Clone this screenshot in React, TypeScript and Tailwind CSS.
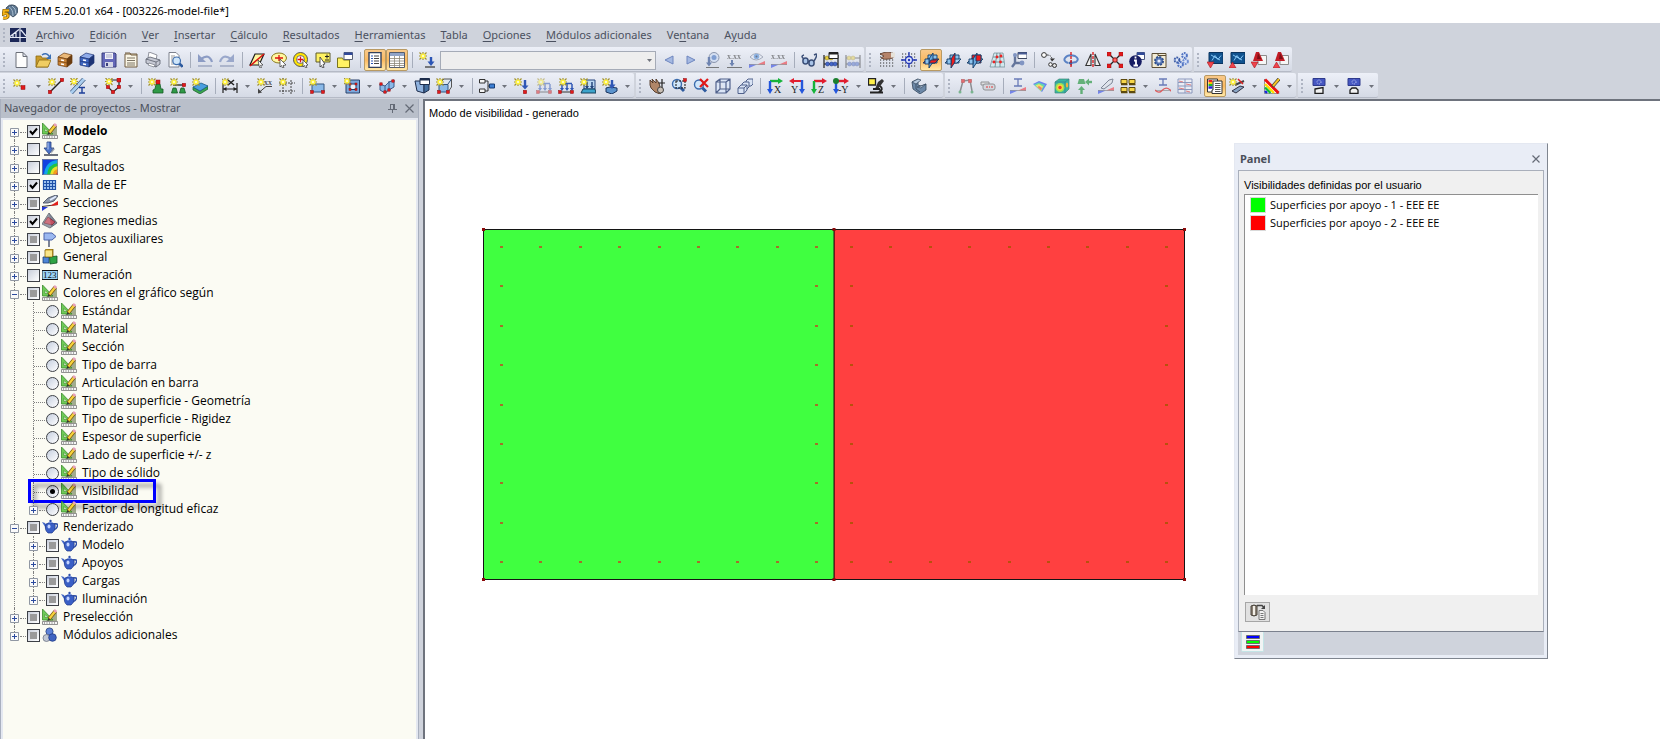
import React, { useState } from "react";
import { clsx } from "clsx";

/* ---------- small drawing helpers ---------- */

const Star = ({ x = 4, y = 4 }: { x?: number; y?: number }) => (
  <g transform={`translate(${x} ${y})`}>
    <path d="M-3.5-3.5 3.5 3.5M3.5-3.5-3.5 3.5M0-4V4M-4 0H4" stroke="#a3922e" strokeWidth="1.2" />
    <circle r="2.6" fill="#fff23a" />
    <circle r="1.1" fill="#fffde0" />
  </g>
);

const Node = ({ x, y, r = 2 }: { x: number; y: number; r?: number }) => (
  <rect x={x - r} y={y - r} width={r * 2} height={r * 2} fill="#e3191b" stroke="#8d1113" strokeWidth=".5" />
);

const Glass = ({ x = 9, y = 9 }: { x?: number; y?: number }) => (
  <g>
    <path d={`M${x + 3} ${y + 3}l4 4`} stroke="#2d5a9e" strokeWidth="3" />
    <circle cx={x} cy={y} r="4.5" fill="#cfe6fa" stroke="#3b6cae" strokeWidth="1.4" />
  </g>
);

const Cabinet = ({ a, b, c }: { a: string; b: string; c: string }) => (
  <g stroke={c} strokeWidth=".7">
    <path d="M1 5l6-4 8 2-5 4z" fill={a} />
    <path d="M10 7l5-4v8l-5 4z" fill={c} />
    <path d="M1 5l9 2v8l-9-2z" fill={b} />
    <path d="M1 9l9 2" />
    <path d="M4 8l3 .6M4 12l3 .6" stroke="#fff" strokeWidth="1.5" />
  </g>
);

const Planes = ({ hot }: { hot: "flat" | "side" | "front" }) => (
  <g stroke="#123a66" strokeWidth=".9">
    <path d="M5 3h9v8H5z" fill={hot === "front" ? "#f01c1c" : "#8cc4ef"} />
    <path d="M0 11l4-4h12l-4 4z" fill={hot === "flat" ? "#f01c1c" : "#a9d3f5"} />
    <path d="M6 7l4-6v9l-4 6z" fill={hot === "side" ? "#f01c1c" : "#6aa9df"} />
    <path d="M2 7h4v5H2z" fill="#8cc4ef" />
    {hot === "flat" && <path d="M6 11l2-3h7l-3 3z" fill="#f01c1c" />}
    {hot === "front" && <path d="M9 3h5v6H9z" fill="#f01c1c" />}
  </g>
);

const Grid = ({ c = "#333" }: { c?: string }) => (
  <path d="M1 2h15M1 5h15M1 8h15M1 11h15M1 14h15" stroke={c} strokeWidth="1.2" strokeDasharray="1.200 1.800" />
);

const Axes = ({ h, v, t, flip }: { h: string; v: string; t: string; flip?: boolean }) => (
  <g>
    {flip ? (
      <>
        <path d="M14 3H4M13 3v9" stroke={h} strokeWidth="2" />
        <path d="M5 0v6L0 3z" fill={h} />
        <path d="M13 2v10" stroke={v} strokeWidth="2.400" />
        <path d="M10 11h6l-3 5z" fill={v} />
      </>
    ) : (
      <>
        <path d="M3 3h9" stroke={h} strokeWidth="2.400" />
        <path d="M11 0v6l5-3z" fill={h} />
        <path d="M3 3v9" stroke={v} strokeWidth="2.400" />
        <path d="M0 11h6l-3 5z" fill={v} />
      </>
    )}
    <text x={flip ? 2 : t.length > 1 ? 5 : 7} y="15" fontSize="10" fontFamily="Liberation Serif, serif" fill="#222">
      {t}
    </text>
  </g>
);

const ResultBar = () => (
  <>
    <path d="M0 12v4l8-3.500z" fill="#5367e8" />
    <path d="M16 9v4l-8-.5z" fill="#ee5a62" />
    <path d="M0 12.500h16" stroke="#777" strokeWidth=".7" />
  </>
);

const Eye = () => (
  <>
    <path d="M1 5q6-7 13 0-7 6-13 0z" fill="#e8ecf5" stroke="#8d95a8" />
    <circle cx="7.500" cy="4.500" r="2.800" fill="#6f9fdc" />
    <circle cx="7.500" cy="4.500" r="1" fill="#40506e" />
  </>
);

const Abacus = ({ dim }: { dim?: boolean }) => (
  <g opacity={dim ? 0.45 : 1}>
    <path d="M1 3v13M15 3v13M1 6h14M1 12h14" stroke="#222" strokeWidth="1.200" />
    <g fill="#e6cd3c" stroke="#8b7714" strokeWidth=".5">
      <circle cx="4" cy="6" r="2" />
      <circle cx="8" cy="6" r="2" />
    </g>
    <g fill="#4567c9" stroke="#1f357d" strokeWidth=".5">
      <circle cx="4.500" cy="12" r="2" />
      <circle cx="8.500" cy="12" r="2" />
      <circle cx="12" cy="12" r="2" />
    </g>
  </g>
);

const Screen = ({ up }: { up?: boolean }) => (
  <>
    <path d="M2 .5h14v11H2z" fill="#10528f" stroke="#0a3460" />
    <path d="M5 8.500l3-5 3 4 3-4M4 3l9 5" stroke="#8fd0ff" strokeWidth=".9" fill="none" />
    {up ? <path d="M0 16l3.500-6 3.500 6z" fill="#f0434c" stroke="#a51a20" strokeWidth=".6" /> : <path d="M0 10h7l-3.500 6z" fill="#f0434c" stroke="#a51a20" strokeWidth=".6" />}
  </>
);

const PdfMark = ({ up }: { up?: boolean }) => (
  <>
    <path d="M7 3.500h8.500v9H7z" fill="#f6f6f6" stroke="#8c8c8c" />
    <path d="M5 0h3l4 9H2z" fill="#c21c26" />
    <path d="M7 1l3 6H6z" fill="#7e0f16" />
    {up ? <path d="M0 16l3.500-6 3.500 6z" fill="#f0434c" stroke="#a51a20" strokeWidth=".6" /> : <path d="M0 10h7l-3.500 6z" fill="#f0434c" stroke="#a51a20" strokeWidth=".6" />}
  </>
);

const Projector = ({ tilt }: { tilt?: boolean }) => (
  <>
    <path d="M2 .5h12v7H2z" fill="#4657c2" stroke="#2e3a8c" />
    <circle cx="8" cy="4" r="2" stroke="#c5ccf5" strokeDasharray="1 1" />
    <path d={tilt ? "M4 11l8-1.500V15.500H4z" : "M4 15.500V12l2-2h4l2 2v3.500z"} fill="#f2f2f2" stroke="#1d1d1d" strokeWidth="1.300" />
  </>
);

const SmallGear = ({ x, y, c }: { x: number; y: number; c: string }) => (
  <circle cx={x} cy={y} r="2.400" fill="#dbe5fa" stroke={c} strokeWidth="2" strokeDasharray="1.600 .8" />
);

const Gate = ({ dim }: { dim?: boolean }) => (
  <g opacity={dim ? 0.5 : 1}>
    <path d="M4 11V6M9 11V6M14 11V6M4 5.500h10" stroke="#2f57b5" strokeWidth="1.500" />
    <path d="M2 10h4l-2 3zM7 10h4l-2 3zM12 10h4l-2 3z" fill="#2f57b5" />
    <path d="M1 14h14" stroke="#333" />
    <Node x={2} y={14} r={1.5} />
    <Node x={14} y={14} r={1.5} />
    <Star x={5} y={4} />
  </g>
);

const icons: Record<string, React.ReactNode> = {
  newFile: <path d="M3 .5h7l4 4V15.500H3zM10 .5v4h4" fill="#fdfdfd" stroke="#6b6f78" />,
  open: (
    <>
      <path d="M1 4h5l1 2h6v9H1z" fill="#c99b2c" stroke="#8d6b12" strokeWidth=".8" />
      <path d="M4 8h12l-3 7H1z" fill="#f0cd62" stroke="#8d6b12" strokeWidth=".8" />
      <path d="M7 3q4-3 7 1" stroke="#3a6fb5" strokeWidth="1.500" />
      <path d="M16 2v5h-5z" fill="#3a6fb5" />
    </>
  ),
  cabinet: <Cabinet a="#eab878" b="#c98337" c="#6b3c10" />,
  cabinetBlue: <Cabinet a="#8fabea" b="#3f66c0" c="#1c3375" />,
  save: (
    <>
      <path d="M1 1h13l1 1v13H1z" fill="#6468b8" stroke="#3b3f7e" />
      <path d="M4 1h8v6H4z" fill="#f2f2f8" />
      <path d="M5 3h6M5 5h6" stroke="#a6a9c9" />
      <path d="M4 10h8v5H4z" fill="#d4d6e6" />
      <path d="M5 11h2v3H5z" fill="#3b3f7e" />
    </>
  ),
  report: (
    <>
      <path d="M2 2h12v13H2z" fill="#faf6e6" stroke="#6e5a3e" />
      <path d="M2 1h5l1 2h6" stroke="#6e5a3e" fill="#d9c59d" />
      <path d="M4 6h8M4 8.500h8M4 11h8M4 13h8" stroke="#7c7465" />
    </>
  ),
  print: (
    <>
      <path d="M4 0l8 3-1 5-8-2z" fill="#fff" stroke="#777a86" strokeWidth=".8" />
      <path d="M1 7l4-2 10 3v4l-4 3L1 11z" fill="#c6c9d4" stroke="#5b5f6c" strokeWidth=".8" />
      <path d="M1 7l10 3v5M11 10l4-2" stroke="#5b5f6c" strokeWidth=".8" />
      <path d="M4 11l6 2-1 2-6-2z" fill="#fff" stroke="#5b5f6c" strokeWidth=".6" />
    </>
  ),
  preview: (
    <>
      <path d="M2 .5h7l3 3V15H2z" fill="#fff" stroke="#7c818d" />
      <path d="M4 4h4M4 6h4M4 8h2M4 10h2M4 12h3" stroke="#999" />
      <g transform="translate(2 2) scale(.85)">
        <Glass x={9} y={8} />
      </g>
    </>
  ),
  undo: (
    <>
      <path d="M4 7q8-6 11 3" stroke="#8c9cc4" strokeWidth="2.200" />
      <path d="M1 2v8h8z" fill="#8c9cc4" />
      <path d="M1 14h14" stroke="#a7b0c8" strokeWidth="1.800" />
    </>
  ),
  redo: (
    <>
      <path d="M1 10q3-9 11-3" stroke="#9aa8cb" strokeWidth="2.200" />
      <path d="M15 2v8H7z" fill="#9aa8cb" />
      <path d="M1 14h14" stroke="#a7b0c8" strokeWidth="1.800" />
    </>
  ),
  selectRhomb: (
    <>
      <path d="M6 2h9l-5 11H1z" fill="#fff7a0" stroke="#1a1a1a" strokeWidth="1.200" />
      <path d="M1 14L15 2" stroke="#d11" strokeWidth="1.500" />
      <path d="M9 8l5 5-2.500.3 1 2.200-1.500.5-1-2.500z" fill="#fff" stroke="#333" strokeWidth=".7" />
    </>
  ),
  selectEllipse: (
    <>
      <ellipse cx="8" cy="6" rx="7.500" ry="5" fill="#fff7a0" stroke="#8a7a20" />
      <path d="M4 6h8M8 3v6" stroke="#d11" strokeWidth="1.300" />
      <path d="M9 7l6 6-3 .5 1 2-1.500.5-1-2.500L9 15z" fill="#fff" stroke="#333" strokeWidth=".7" />
    </>
  ),
  selectRing: (
    <>
      <circle cx="7.500" cy="7.500" r="7" fill="#ffe500" stroke="#555" />
      <circle cx="7.500" cy="7.500" r="4" fill="#fff" stroke="#555" strokeWidth=".8" />
      <path d="M4.500 7.500h6M7.500 4.500v6" stroke="#d11" strokeWidth="1.300" />
      <path d="M10 8l5 5-2 .5 1 2-1.500.5-1-2.500L10 15z" fill="#fff" stroke="#333" strokeWidth=".7" />
    </>
  ),
  selectPlus: (
    <>
      <path d="M1 1h14v9H1z" fill="#fff263" stroke="#5c5a2a" />
      <path d="M10 4.500h4M12 2.500v4M10 8h4" stroke="#222" />
      <path d="M5 5l5 7-2 .5 1 3-1.500.5-1-2.500L5 15z" fill="#fff" stroke="#333" strokeWidth=".8" />
    </>
  ),
  folderWindow: (
    <>
      <path d="M.5 6h5l1 2h6v7.500H.5z" fill="#fff263" stroke="#7a741b" />
      <path d="M7 .5h8.500v7H7z" fill="#fff" stroke="#5b6275" />
      <path d="M7 .5h8.500V3H7z" fill="#314a9a" />
    </>
  ),
  navList: (
    <>
      <path d="M2 .5h12v15H2z" fill="#fff" stroke="#33415c" strokeWidth="1.400" />
      <path d="M4 4h2M4 6.500h2M4 9h2M4 11.500h2" stroke="#2b55b5" />
      <path d="M7 4h5M7 6.500h5M7 9h5M7 11.500h5" stroke="#444" />
    </>
  ),
  tableList: (
    <>
      <path d="M.5.5h15v15H.5z" fill="#fff" stroke="#555d6d" />
      <path d="M1 1h14v3H1z" fill="#90a4c8" />
      <path d="M1 6.500h14M1 9h14M1 11.500h14M1 13.500h14M5.500 4v11M10.500 4v11" stroke="#8b8777" strokeWidth=".8" />
    </>
  ),
  loadCase: (
    <>
      <Star x={4} y={4} />
      <path d="M12 5v6" stroke="#2b55b5" strokeWidth="2.400" />
      <path d="M8.500 9.500h7L12 14z" fill="#2b55b5" />
      <path d="M6 15h10" stroke="#555" strokeWidth="1.500" />
    </>
  ),
  prev: <path d="M12 4v8L4 8z" fill="#a5b9e2" stroke="#6e86bf" />,
  next: <path d="M4 4v8l8-4z" fill="#a5b9e2" stroke="#6e86bf" />,
  showLoads: (
    <g opacity=".75">
      <circle cx="9" cy="5.500" r="5" fill="#cfdcf2" stroke="#6d7a96" />
      <circle cx="9" cy="5.500" r="2.500" fill="#5f86c8" />
      <path d="M4 5v7" stroke="#49659e" strokeWidth="2.400" />
      <path d="M1 10.500h6L4 14.500z" fill="#49659e" />
      <path d="M1 15.500h13" stroke="#555" />
    </g>
  ),
  loadValues: (
    <g opacity=".75">
      <text x="0" y="7" fontSize="8" fontFamily="Liberation Serif, serif" fill="#333">x.xx</text>
      <path d="M5 8v4" stroke="#49659e" strokeWidth="2" />
      <path d="M2.500 11h5L5 14.500z" fill="#49659e" />
      <path d="M0 15.500h15" stroke="#555" />
    </g>
  ),
  showResults: (
    <g opacity=".75">
      <Eye />
      <ResultBar />
    </g>
  ),
  resultValues: (
    <g opacity=".75">
      <text x="0" y="7" fontSize="8" fontFamily="Liberation Serif, serif" fill="#333">x.xx</text>
      <ResultBar />
    </g>
  ),
  glasses: (
    <g fill="#a9c4e8" stroke="#3b4f78" strokeWidth="1.500">
      <path d="M3 7q-4-3 0-4M13 9q4-6 2-7l-2 1" fill="none" />
      <ellipse cx="4.500" cy="9" rx="2.600" ry="3" />
      <ellipse cx="10.500" cy="11" rx="2.600" ry="3" />
      <path d="M7 9l1.500 1" />
    </g>
  ),
  abacusWindow: (
    <>
      <Abacus />
      <path d="M6 .5h9v6H6z" fill="#fff" stroke="#222" />
      <path d="M6 .5h9v2H6z" fill="#222" />
    </>
  ),
  abacus: <Abacus dim />,
  handGrid: (
    <>
      <Grid />
      <path d="M1 2q4-2 8-2l5 1v5l-4 1q-5 1-8-1l3-2z" fill="#b5836a" stroke="#57392a" strokeWidth=".8" />
      <path d="M12 .5h4v5h-4z" fill="#e6e2da" />
    </>
  ),
  snapGrid: (
    <>
      <Grid />
      <path d="M8 0v16M0 8h16" stroke="#2338b8" strokeWidth="1.300" />
      <circle cx="8" cy="8" r="3.500" fill="#dfe7fb" stroke="#2338b8" strokeWidth="1.300" />
      <circle cx="8" cy="8" r="1.200" fill="#2338b8" />
    </>
  ),
  planeXY: <Planes hot="flat" />,
  planeYZ: <Planes hot="side" />,
  planeXZ: <Planes hot="front" />,
  redGrid: (
    <>
      <path d="M5 1h9l2 14H1z" fill="#d3e8ee" stroke="#6a8790" strokeWidth=".7" />
      <path d="M8 1l-2 14M11 1l0 14M4 5h10M3 10h12" stroke="#5f7b84" strokeWidth=".8" />
      <g fill="#e22">
        <circle cx="8" cy="5" r="1.400" />
        <circle cx="5" cy="10" r="1.400" />
        <circle cx="11.500" cy="10" r="1.400" />
        <circle cx="12" cy="4" r="1.400" />
      </g>
    </>
  ),
  axisWindow: (
    <>
      <path d="M4 3v8h7M4 11l-3 4" stroke="#64759b" strokeWidth="2.400" />
      <path d="M7 .5h9v6H7z" fill="#fff" stroke="#3c4660" />
      <path d="M7 .5h9v2H7z" fill="#4a5e96" />
      <circle cx="4" cy="3" r="2" fill="#8195c2" />
      <circle cx="11" cy="11" r="2.400" fill="#8195c2" />
    </>
  ),
  moveCopy: (
    <>
      <circle cx="3" cy="3" r="2.400" fill="#fff" stroke="#333" />
      <path d="M6 3q5 0 5 5" stroke="#333" strokeDasharray="1.500 1" />
      <path d="M9 6.500h5l-3 3z" fill="#333" />
      <circle cx="9.500" cy="12.500" r="1.800" fill="#fff" stroke="#333" />
      <circle cx="13.500" cy="13.500" r="2" fill="#ddd" stroke="#333" />
    </>
  ),
  rotate: (
    <>
      <path d="M5 11Q0 9 2 6q3-4 10-2 5 3 1 6l-5 1" stroke="#5a82c4" strokeWidth="2" />
      <path d="M9 8v6l-4-3z" fill="#3c64a8" />
      <path d="M8 0v16" stroke="#d11" strokeWidth="1.300" strokeDasharray="3 1" />
    </>
  ),
  mirror: (
    <>
      <path d="M8 0v16" stroke="#d11" strokeWidth="1.300" strokeDasharray="3 1" />
      <path d="M6 2v11.500H.8zM10 2v11.500h5.200z" fill="#eee" stroke="#333" strokeWidth="1.100" />
    </>
  ),
  connect: (
    <>
      <path d="M2 2l12 12M14 2L2 14" stroke="#222" strokeWidth="1.300" />
      <Node x={2} y={2} />
      <Node x={14} y={2} />
      <Node x={2} y={14} />
      <Node x={14} y={14} />
      <circle cx="8" cy="8" r="2.200" fill="#f66" stroke="#911" />
    </>
  ),
  info: (
    <>
      <path d="M8 .5h7.500v7H8z" fill="#fff" stroke="#4b567e" />
      <path d="M8 .5h7.500V3H8z" fill="#314a9a" />
      <circle cx="6.500" cy="9.500" r="6.300" fill="#171d63" />
      <path d="M6.500 4.500v2M5 8.500h2v5M4.500 13.500h4.500" stroke="#fff" strokeWidth="1.800" />
    </>
  ),
  gearPage: (
    <>
      <path d="M1 1.500h14v14H1z" fill="#f3ecd6" stroke="#5a4c34" />
      <path d="M1 1.500h6v2h8" stroke="#5a4c34" />
      <circle cx="8" cy="9" r="4" fill="#5d7cb8" stroke="#30508f" strokeWidth="2" strokeDasharray="2 1.100" />
      <circle cx="8" cy="9" r="1.600" fill="#e8eefa" />
    </>
  ),
  gears: (
    <>
      <SmallGear x={4} y={8} c="#3a5ba6" />
      <SmallGear x={11.500} y={3.500} c="#5274c2" />
      <SmallGear x={7.500} y={12.500} c="#5274c2" />
      <SmallGear x={12.500} y={9.500} c="#7290d3" />
    </>
  ),
  screenIn: <Screen />,
  screenOut: <Screen up />,
  pdfIn: <PdfMark />,
  pdfOut: <PdfMark up />,

  node: (
    <>
      <Star x={4} y={5} />
      <Node x={10} y={9.500} />
    </>
  ),
  line: (
    <>
      <path d="M2 14L14 2" stroke="#222" strokeWidth="1.400" />
      <Node x={2} y={14} r={1.7} />
      <Node x={14} y={2} r={1.7} />
      <Star x={4} y={4} />
    </>
  ),
  member: (
    <>
      <path d="M1 15L14 1" stroke="#a9cdf0" strokeWidth="3" />
      <path d="M0 13.500L12.500 0M2.500 16L15.500 2" stroke="#32557f" strokeWidth=".9" />
      <path d="M9 9.500h6M9 15h6M12 9.500V15" stroke="#1e3f99" strokeWidth="1.400" />
      <Star x={4} y={3.500} />
    </>
  ),
  polyline: (
    <>
      <path d="M4 2h10v7l-6 5-5-5" stroke="#222" strokeWidth="1.200" />
      <Node x={14} y={2} />
      <Node x={14} y={9} r={1.7} />
      <Node x={8} y={14} r={1.7} />
      <Node x={3} y={9} r={1.7} />
      <Star x={4} y={3.500} />
    </>
  ),
  nodalSupport: (
    <>
      <path d="M8 6h4l1 5h2v4H5v-3l2-1z" fill="#2f9a47" stroke="#145a24" strokeWidth=".8" />
      <Node x={10} y={4} />
      <Star x={4} y={4} />
    </>
  ),
  lineSupport: (
    <>
      <path d="M3 7h12" stroke="#222" strokeWidth="1.300" />
      <path d="M3 10h3l1.500 5h-6zM11 10h3l1.500 5h-6z" fill="#2f9a47" stroke="#145a24" strokeWidth=".8" />
      <Node x={14} y={7} r={1.7} />
      <Star x={4} y={4} />
    </>
  ),
  surfaceSupport: (
    <>
      <path d="M1 9v3l7 4 8-5V8l-8 5z" fill="#3aa650" stroke="#155a26" strokeWidth=".7" />
      <path d="M1 9l8-4 7 3-8 5z" fill="#4a9fe0" stroke="#1c5d86" strokeWidth=".8" />
      <Star x={4} y={4} />
    </>
  ),
  dimension: (
    <>
      <path d="M1 5v10M15 5v10M1 11h14" stroke="#222" strokeWidth="1.200" />
      <path d="M1 11l3.500-2v4zM15 11l-3.500-2v4z" fill="#222" />
      <path d="M6 2l6 5M12 2L6 7" stroke="#222" strokeWidth="1.500" />
      <Star x={3} y={4} />
    </>
  ),
  comment: (
    <>
      <text x="7" y="7" fontSize="8" fontFamily="Liberation Serif, serif" fill="#222">xx</text>
      <path d="M15 8.500H9l-7 6" stroke="#444" />
      <path d="M1 15.500v-5l4 4z" fill="#444" />
      <Star x={4} y={4} />
    </>
  ),
  gridLines: (
    <>
      <path d="M4 0v16M12 2v14M0 5h16M0 13h16" stroke="#444" strokeDasharray="2 1" />
      <Star x={4} y={4} />
    </>
  ),
  surface: (
    <>
      <path d="M3 6h12v8H3z" fill="#8ab9e8" stroke="#33547f" />
      <Node x={3} y={14} r={1.5} />
      <Node x={14} y={14} r={1.5} />
      <Star x={4} y={4} />
    </>
  ),
  opening: (
    <>
      <path d="M2 2h13.500v13H2z" fill="#7ca8dc" stroke="#2a426b" />
      <path d="M6 6h6v5.500H6z" fill="#eef4fc" stroke="#223f6b" />
      <Node x={6} y={6} r={1} />
      <Node x={12} y={11.500} r={1} />
      <Node x={12} y={6} r={1} />
      <Node x={6} y={11.500} r={1} />
      <Star x={3} y={3} />
    </>
  ),
  foldSurface: (
    <>
      <path d="M1 6l5 2 4-4 5-2v7l-5 3-4 3-5-3z" fill="#8ab9e8" stroke="#3d5c8c" />
      <path d="M6 8v7M10 3v9" stroke="#3d5c8c" />
      <Node x={2} y={6} r={1.2} />
      <Node x={10} y={12} r={1.2} />
      <Node x={6} y={14} r={1.2} />
      <Node x={14} y={3} r={1.2} />
    </>
  ),
  solidWindow: (
    <>
      <path d="M1 3h9v12l-7-2z" fill="#8fb2de" stroke="#1d2d4c" />
      <path d="M10 5l5-1v8l-5 3z" fill="#456f9f" stroke="#1d2d4c" />
      <path d="M6 .5h9.500v6H6z" fill="#fff" stroke="#1d2d4c" />
      <path d="M6 .5h9.500v2H6z" fill="#1d2d4c" />
    </>
  ),
  solid: (
    <>
      <path d="M3 6l5-5h7.500v8L12 14z" fill="#dde6f2" stroke="#555" />
      <path d="M3 6.500h9V14H3zM12 6l3.500-5" fill="#8ab9e8" stroke="#33547f" />
      <Node x={3} y={14} r={1.5} />
      <Node x={12} y={14} r={1.5} />
      <Star x={4} y={4} />
    </>
  ),
  tree: (
    <>
      <path d="M5 3h4v10H5M9 8h3" stroke="#333" />
      <path d="M.5 1.500H6v3.500H.5zM.5 11H6v3.500H.5z" fill="#f4f4f4" stroke="#333" />
      <path d="M10.500 6h5v4h-5z" fill="#3c7fd4" stroke="#173d74" />
    </>
  ),
  nodalLoad: (
    <>
      <path d="M11 2v7" stroke="#2f57b5" strokeWidth="2.400" />
      <path d="M7.500 7.500h7L11 11.500z" fill="#2f57b5" />
      <Node x={11} y={14} r={1.7} />
      <Star x={4} y={4} />
    </>
  ),
  memberLoadDim: <Gate dim />,
  memberLoad: <Gate />,
  surfaceLoad: (
    <>
      <path d="M4 2h11v9H4z" fill="#bcd8f3" stroke="#26457c" />
      <path d="M3 11h12l1 4H1z" fill="#3ca4cc" stroke="#16415a" />
      <path d="M7 4v6M12 4v6" stroke="#26457c" strokeWidth="1.500" />
      <path d="M5 8h4l-2 3zM10 8h4l-2 3z" fill="#26457c" />
      <Star x={4} y={4} />
    </>
  ),
  solidLoad: (
    <>
      <path d="M4 10l4-1 7 1v3l-5 3-6-2z" fill="#5b93cc" stroke="#1a3560" />
      <path d="M10 2v5" stroke="#2f57b5" strokeWidth="2.400" />
      <path d="M6.500 6.500h7L10 11z" fill="#2f57b5" />
      <Star x={4} y={4} />
    </>
  ),
  pan: (
    <>
      <path d="M1 2l3 3-1-4 4 4 0-4 3 4 1 4 3 3-3 4-5-2-4-4-1-3z" fill="#b08668" stroke="#4d3424" strokeWidth=".9" />
      <path d="M13 1v9M9.500 5H16" stroke="#222" strokeWidth="1.200" />
      <circle cx="11.500" cy="12" r="3" fill="#c9c0b6" stroke="#444" />
    </>
  ),
  zoomWindow: (
    <>
      <Glass x={6} y={6} />
      <path d="M5 3h9v7H5z" stroke="#222" strokeWidth="1.100" strokeDasharray="2 1" />
      <Node x={14} y={2} r={1.5} />
    </>
  ),
  zoomOff: (
    <>
      <Glass x={6} y={6.500} />
      <path d="M7 1l8 8M15 1L7 9" stroke="#e01818" strokeWidth="2.200" />
    </>
  ),
  wireCube: (
    <path d="M1 4h10v11H1zM5 1h10v10l-4 4M1 4l4-3M11 4l4-3M5 1v10h10M5 11l-4 4" fill="#dbe5f6" stroke="#51628c" strokeWidth="1.200" />
  ),
  cubes: (
    <g fill="#d9e3f4" stroke="#51628c">
      <path d="M9 3l2-2h5v5l-2 2H9z" />
      <path d="M5 6l2-2h5v5l-2 2H5z" />
      <path d="M1 10l3-3h6v5l-3 3.500H1zM1 10h6v5.500M7 10l3-3" />
    </g>
  ),
  viewX: <Axes h="#16b33a" v="#2456dc" t="X" />,
  viewY: <Axes h="#e11d2e" v="#2456dc" t="Y" flip />,
  viewZ: <Axes h="#e11d2e" v="#16b33a" t="Z" />,
  viewNegY: (
    <>
      <Axes h="#e11d2e" v="#2456dc" t="-Y" />
      <circle cx="3" cy="3" r="3" fill="#1a7f2e" />
    </>
  ),
  microscope: (
    <>
      <path d="M10 4l4-3 2 2-6 8H7z" fill="#333" />
      <path d="M2 14.500h13M12 8q4 3-1 6M5 11h7" stroke="#222" strokeWidth="2" />
      <path d="M.5.500h7v6.500h-7z" fill="#fff04a" stroke="#222" strokeWidth="1.300" />
    </>
  ),
  shape: (
    <>
      <path d="M1 4l6-3v6l3 1 5-2v6l-6 4-7-5z" fill="#6d89a8" stroke="#34465c" strokeWidth=".8" />
      <path d="M1 4l6-3 3 1-5 4zM6 9l4-1 5-2-5 4z" fill="#b7cade" stroke="#34465c" strokeWidth=".7" />
      <path d="M5 6v5l4 3" stroke="#34465c" strokeWidth=".8" />
    </>
  ),
  frame: (
    <g opacity=".6">
      <path d="M2 14L5 3l7-1 2 11" stroke="#555" strokeWidth="1.500" />
      <Node x={5} y={3} r={1.7} />
      <Node x={12} y={3} r={1.7} />
      <circle cx="2" cy="14" r="1.500" fill="#3a9a55" />
      <circle cx="14" cy="14" r="1.500" fill="#3a9a55" />
    </g>
  ),
  recorder: (
    <g opacity=".75">
      <path d="M1 4h8v3H1z" fill="#ddd" stroke="#777" />
      <rect x="3" y="6" width="12" height="6" rx="2" fill="#d0d3d8" stroke="#777" />
      <path d="M6 9h2M9 9h1M11 9h2" stroke="#d44" strokeWidth="1.500" />
    </g>
  ),
  sectionResult: (
    <g opacity=".75">
      <path d="M4 1h8M4 8h8M8 1v7" stroke="#4057a5" strokeWidth="1.300" />
      <ResultBar />
    </g>
  ),
  rainbowPlate: (
    <g opacity=".8">
      <path d="M1 6l6-3 8 3-5 8z" fill="#4b6df0" />
      <path d="M2 6.500l5-2 6 2.500-4 6.500z" fill="#44d6a0" />
      <path d="M3.500 7.500L7 6l4 2.500L9 13z" fill="#f4e34a" />
      <path d="M5.500 9L7 8l3 2-1 2.500z" fill="#f2674b" />
    </g>
  ),
  rainbowCube: (
    <>
      <path d="M1 4l4-3h10v10l-4 4H1z" fill="#36b7a1" stroke="#487" strokeWidth=".7" />
      <path d="M1 4h10v11M11 4l4-3" stroke="#3a7d90" strokeWidth=".7" />
      <circle cx="6" cy="9.500" r="4.500" fill="#9be05a" />
      <circle cx="6" cy="9.500" r="3" fill="#f6de3b" />
      <circle cx="6" cy="9.500" r="1.700" fill="#ee3b2b" />
      <ellipse cx="13" cy="7" rx="1.200" ry="2.500" fill="#f0b33b" />
    </>
  ),
  supportArrows: (
    <g opacity=".7">
      <path d="M3 1h5l1.500 5h-8z" fill="#2f9a47" />
      <path d="M5.500 16v-5" stroke="#2f9a47" strokeWidth="2.400" />
      <path d="M2 12l3.500-4 3.500 4zM9 4l4-3.500v7z" fill="#2f9a47" />
      <path d="M12 4h4" stroke="#2f9a47" strokeWidth="2.400" />
    </g>
  ),
  beamResult: (
    <g opacity=".75">
      <path d="M3 10l8-8 4-1-1 4-8 6z" fill="#dfe3ea" stroke="#5d6678" />
      <ResultBar />
    </g>
  ),
  yellowBoxes: (
    <g fill="#f6d64a" stroke="#5c4a0e">
      <path d="M1 1.500h6v4H1zM9 1.500h6v4H9zM1 9.500h6v4H1zM9 9.500h6v4H9z" />
      <path d="M1 6.500h6.500M9 6.500h6.500M1 14.500h6.500M9 14.500h6.500" strokeWidth="1.500" />
    </g>
  ),
  sectionWave: (
    <g opacity=".75">
      <path d="M4 1h8M4 7h8M8 1v6" stroke="#4057a5" strokeWidth="1.300" />
      <path d="M0 12.500h16" stroke="#777" strokeWidth=".7" />
      <path d="M0 12q4 4 7 .5t6-2 3 3" stroke="#d33" strokeWidth="1.300" />
    </g>
  ),
  resultTable: (
    <g opacity=".7">
      <path d="M1 1h14v14H1zM8 1v14M1 4.500h14M1 8h14M1 11.500h14" fill="#eef1f8" stroke="#6878a8" />
      <path d="M2 3l4 1M9 6l5 1M2 10l5 1M9 13l4 1" stroke="#d55" />
    </g>
  ),
  colorPanel: (
    <>
      <path d="M.500 1h10v13H.500z" fill="#fff" stroke="#333" />
      <path d="M1.500 3h4" stroke="#e22" strokeWidth="2" />
      <path d="M1.500 5h4" stroke="#fb0" strokeWidth="2" />
      <path d="M1.500 7h4" stroke="#2b2" strokeWidth="2" />
      <path d="M1.500 9.500h4" stroke="#22d" strokeWidth="2.500" />
      <path d="M6 3h9v12.500H5V12h1z" fill="#fff" stroke="#333" />
      <path d="M8 5.500h5.500M8 7.500h5.500M8 9.500h5.500M8 11.500h5.500M8 13.500h5.500" stroke="#555" />
    </>
  ),
  wand: (
    <>
      <path d="M3 13l8-5 4 1-8 6z" fill="#8aa5c4" stroke="#223" strokeWidth=".9" />
      <path d="M6 7l9-4" stroke="#444" strokeWidth="2" />
      <path d="M9 1l5 5" stroke="#d22" strokeWidth="1.500" />
      <Star x={4} y={4} />
    </>
  ),
  rainbowPencil: (
    <>
      <path d="M.500 1v14.500H15z" fill="#fff" stroke="#555" strokeWidth=".6" />
      <path d="M1 1.500L14.500 15" stroke="#e11" strokeWidth="3" />
      <path d="M1 6l9 9" stroke="#fd0" strokeWidth="2.400" />
      <path d="M1 9.500L6.500 15" stroke="#1b3" strokeWidth="2.400" />
      <path d="M1 13l2 2" stroke="#12d" strokeWidth="2.400" />
      <path d="M8.500 8.500L15 1" stroke="#333" strokeWidth="3.400" />
      <path d="M9 8L15 1" stroke="#f5c526" strokeWidth="2" />
    </>
  ),
  projectorTilt: <Projector tilt />,
  projector: <Projector />,

  ruler: (
    <>
      <path d="M.5 12.500h15v3H.5z" fill="#f6f6f6" stroke="#777" strokeWidth=".8" />
      <path d="M2.500 13v2M5 13v2M7.500 13v2M10 13v2M12.500 13v2" stroke="#888" strokeWidth=".7" />
      <path d="M4 12L15 3v9z" fill="#5a6b3a" opacity=".55" />
      <path d="M.5 0v11H11z" fill="#6ecb57" stroke="#3a8a2c" strokeWidth=".8" />
      <path d="M3 5.500v3h3z" fill="#fbfbf3" stroke="#3a8a2c" strokeWidth=".6" />
      <path d="M7 10l6.500-8" stroke="#7a5a10" strokeWidth="3.600" />
      <path d="M7.500 9.500l5.500-7" stroke="#f8d33a" strokeWidth="2.200" />
      <path d="M12.500 3l1.500-2" stroke="#e8a0b8" strokeWidth="3" />
      <path d="M5.500 12l.8-3 2 1.500z" fill="#333" />
    </>
  ),
  loadArrow: (
    <>
      <path d="M2 14h14" stroke="#3a4254" strokeWidth="1.500" />
      <path d="M5 1h4v6h3l-5 6-5-6h3z" fill="#4c74c9" stroke="#26407e" strokeWidth=".8" />
      <path d="M6 1.500v7" stroke="#b8cdf5" />
      <path d="M10 7l3 1-4 5z" fill="#7d8494" opacity=".7" />
    </>
  ),
  rainbow: (
    <>
      <path d="M0 0h16v16H0z" fill="#1240e0" />
      <path d="M16 1Q3 2 2 16h14z" fill="#12a6e8" />
      <path d="M16 4Q6 5 5 16h11z" fill="#23c443" />
      <path d="M16 7Q9 8 8 16h8z" fill="#e9e22b" />
      <path d="M16 10q-5 1-5 6h5z" fill="#f49a1e" />
      <path d="M16 13q-2 1-2 3h2z" fill="#e3201b" />
      <path d="M.5.5h15v15H.5z" stroke="#888" strokeWidth=".7" />
    </>
  ),
  mesh: (
    <>
      <path d="M1 3h13v10H1z" fill="#a9cdf5" />
      <path d="M1.500 3v10M4.500 3v10M7.500 3v10M10.500 3v10M13.500 3v10M1 3.500h13M1 6.500h13M1 9.500h13M1 12.500h13" stroke="#1f52a8" strokeWidth="1.200" />
    </>
  ),
  section: (
    <>
      <path d="M1 8l5-5 8-3 2 1-4 5-6 2z" fill="#8d97aa" stroke="#3a4458" strokeWidth=".8" />
      <path d="M8 5l6-3.500" stroke="#dfeaff" strokeWidth="2" />
      <path d="M0 11.500l16-2" stroke="#333" />
      <path d="M0 12v4l6-4z" fill="#2338d8" />
      <path d="M16 6v4l-8 1z" fill="#e3201b" />
    </>
  ),
  pyramid: (
    <>
      <path d="M7 0l8 10-7 5-8-4z" fill="#7e8694" stroke="#474d59" strokeWidth=".7" />
      <path d="M6 4L2 10l8 2 3-3z" fill="#c25060" stroke="#6b2530" strokeWidth=".7" />
      <path d="M7 0l2 13-1 2-8-4z" fill="#fff" opacity=".2" />
    </>
  ),
  sign: (
    <>
      <path d="M7 8v8" stroke="#7b8294" strokeWidth="2" />
      <path d="M2 2h8l4 3.500L10 9H2z" fill="#9bb8f0" stroke="#4a62a8" />
    </>
  ),
  blocks: (
    <>
      <path d="M1 8h6v6H1z" fill="#4c85d6" stroke="#1d3d75" strokeWidth=".8" />
      <path d="M7.500 8L15 7v7l-7 1z" fill="#2ea344" stroke="#145222" strokeWidth=".8" />
      <path d="M3 1l2-1h6v7l-1 1H3z" fill="#c79c25" stroke="#77600f" strokeWidth=".8" />
      <path d="M3.500 1.500H10v6H3.500z" fill="#f8e68a" />
    </>
  ),
  numbers: (
    <>
      <path d="M0 3.500h16v9H0z" fill="#9cd4f6" stroke="#111" />
      <text x="1" y="11" fontSize="9" fontFamily="Liberation Serif, serif" fill="#111">123</text>
    </>
  ),
  teapot: (
    <>
      <path d="M0 3l3 1 3 5-1 2z" fill="#4468c8" />
      <path d="M12 5q4-1 3.500 2t-4 4" stroke="#2f4fa8" strokeWidth="1.500" />
      <path d="M4 5q4-3 9 0 1 6-3 9H6q-4-3-2-9z" fill="#3a5fc6" stroke="#1f3a86" strokeWidth=".7" />
      <path d="M5.500 4q3-2 6 0z" fill="#7f9df0" />
      <circle cx="8.500" cy="2" r="1.200" fill="#2f4fa8" />
      <ellipse cx="7" cy="7.500" rx="1.500" ry="2" fill="#c3d4ff" />
    </>
  ),
  modules: (
    <>
      <circle cx="7.500" cy="4.500" r="3.600" fill="#5f83d8" stroke="#26407e" strokeWidth=".8" />
      <circle cx="4.500" cy="11" r="3.500" fill="#c2c8d4" stroke="#6d7484" strokeWidth=".8" />
      <circle cx="10.500" cy="10.500" r="3.800" fill="#3f63c0" stroke="#1f3a86" strokeWidth=".8" />
    </>
  ),
};

const Icon = ({ name, className = "size-4" }: { name: string; className?: string }) => (
  <svg viewBox="0 0 16 16" className={clsx("shrink-0", className)} fill="none" aria-hidden="true">
    {icons[name]}
  </svg>
);

/* ---------- toolbars ---------- */

// "|" is a separator, a "*" prefix marks a pressed button, a trailing "+" adds a drop-down arrow
type BarItem = string;

const topBars: BarItem[][] = [
  [
    "newFile", "open", "cabinet", "cabinetBlue", "save", "report", "print", "preview", "|",
    "undo", "redo", "|", "selectRhomb", "selectEllipse", "selectRing", "selectPlus", "folderWindow", "|",
    "*navList", "*tableList", "|", "loadCase", "combo", "prev", "next", "showLoads", "loadValues",
    "showResults", "resultValues", "|", "glasses", "abacusWindow", "abacus",
  ],
  [
    "handGrid", "snapGrid", "*planeXY", "planeYZ", "planeXZ", "redGrid", "axisWindow", "|",
    "moveCopy", "rotate", "mirror", "connect", "info", "gearPage", "gears",
  ],
  ["screenIn", "screenOut", "pdfIn", "pdfOut"],
];

const bottomBars: BarItem[][] = [
  [
    "node+", "line", "member+", "polyline+", "|", "nodalSupport", "lineSupport", "surfaceSupport", "|",
    "dimension+", "comment", "gridLines", "|", "surface+", "opening+", "foldSurface+", "solidWindow", "solid+", "|",
    "tree+", "nodalLoad", "memberLoadDim", "memberLoad", "surfaceLoad", "solidLoad+",
  ],
  ["pan", "zoomWindow", "zoomOff", "wireCube", "cubes", "|", "viewX", "viewY", "viewZ", "viewNegY+", "microscope+", "|", "shape+"],
  [
    "frame", "recorder", "|", "sectionResult", "rainbowPlate", "rainbowCube", "supportArrows", "beamResult",
    "yellowBoxes+", "sectionWave", "resultTable", "|", "*colorPanel", "wand+", "rainbowPencil+",
  ],
  ["projectorTilt+", "projector+"],
];

const Grip = () => (
  <svg viewBox="0 0 10 16" className="w-2.5 h-4 shrink-0" aria-hidden="true">
    <path d="M3 1h2v2H3zM3 5h2v2H3zM3 9h2v2H3zM3 13h2v2H3z" fill="#aeb4c2" />
  </svg>
);

const Caret = () => (
  <svg viewBox="0 0 5 3" className="w-[5px] h-[3px]" aria-hidden="true">
    <path d="M0 0h5L2.500 3z" fill="#6f737c" />
  </svg>
);

function ToolItem({ item }: { item: BarItem }) {
  if (item === "|") {
    return (
      <span className="w-2 h-4 shrink-0 flex justify-center">
        <span className="w-px bg-[#a6adbb]" />
      </span>
    );
  }
  if (item === "combo") {
    return (
      <span className="grid items-center w-[216px] mx-[2px] shrink-0">
        <select
          disabled
          aria-label="Caso de carga"
          className="col-start-1 row-start-1 h-[19px] w-full appearance-none border border-[#a5abb7] bg-[#eeeeee]"
        />
        <span className="col-start-1 row-start-1 justify-self-end pr-1"><Caret /></span>
      </span>
    );
  }
  const pressed = item.startsWith("*");
  const hasMenu = item.endsWith("+");
  const name = item.replace(/[*+]/g, "");
  return (
    <>
      <button
        type="button"
        aria-label={name}
        aria-pressed={pressed}
        className={clsx(
          "w-[22px] h-[22px] shrink-0 flex items-center justify-center",
          pressed && "rounded-xs border border-[#b99a63] bg-linear-to-b from-[#f8c98b] via-[#fbb95f] to-[#ffe9a8]"
        )}
      >
        <Icon name={name} />
      </button>
      {hasMenu && (
        <button type="button" aria-label={`${name} menu`} className="w-[13px] h-[22px] shrink-0 flex items-center justify-center">
          <Caret />
        </button>
      )}
    </>
  );
}

function ToolRow({ bars }: { bars: BarItem[][] }) {
  return (
    <div className="flex gap-[2px]">
      {bars.map((bar, i) => (
        <div
          key={i}
          role="toolbar"
          className="h-[25px] pt-0.5 flex items-center rounded-r-xs border-b border-[#b5bac6] bg-linear-to-b from-[#edf0f8] to-[#d5dae5]"
        >
          <Grip />
          {bar.map((item, j) => (
            <ToolItem key={j} item={item} />
          ))}
        </div>
      ))}
    </div>
  );
}

/* ---------- menu ---------- */

// [text before the access key, access key, text after]
const menu: [string, string, string][] = [
  ["", "A", "rchivo"],
  ["", "E", "dición"],
  ["", "V", "er"],
  ["", "I", "nsertar"],
  ["", "C", "álculo"],
  ["", "R", "esultados"],
  ["", "H", "erramientas"],
  ["", "T", "abla"],
  ["", "O", "pciones"],
  ["", "M", "ódulos adicionales"],
  ["Ve", "n", "tana"],
  ["A", "y", "uda"],
];

function MenuBar() {
  return (
    <nav className="h-6 flex items-center bg-[#cfd3dc] text-[11px] text-[#4b5160]">
      <Grip />
      <svg viewBox="0 0 16 14" className="w-4 h-3.5 shrink-0" aria-hidden="true">
        <path d="M0 0h16v14H0z" fill="#1c2858" />
        <path d="M0 9.500h16M10 0v14M0 8.500l9-7M11 2l5 6M3 6v3M6 4v5" stroke="#e4e9f6" strokeWidth="1.200" fill="none" />
      </svg>
      <div className="flex gap-[15px] pl-2.5">
        {menu.map(([before, key, after]) => (
          <button key={key} type="button">
            {before}
            <span className="underline underline-offset-2">{key}</span>
            {after}
          </button>
        ))}
      </div>
    </nav>
  );
}

/* ---------- navigator tree ---------- */

type Mark = "on" | "off" | "mixed" | "radio";

interface TreeNode {
  label: string;
  icon: string;
  mark: Mark;
  bold?: boolean;
  leaf?: boolean;
  framed?: boolean;
  children?: TreeNode[];
}

const radio = (label: string, extra: Partial<TreeNode> = {}): TreeNode => ({ label, icon: "ruler", mark: "radio", leaf: true, ...extra });
const render = (label: string): TreeNode => ({ label, icon: "teapot", mark: "mixed" });

const tree: TreeNode[] = [
  { label: "Modelo", icon: "ruler", mark: "on", bold: true },
  { label: "Cargas", icon: "loadArrow", mark: "off" },
  { label: "Resultados", icon: "rainbow", mark: "off" },
  { label: "Malla de EF", icon: "mesh", mark: "on" },
  { label: "Secciones", icon: "section", mark: "mixed" },
  { label: "Regiones medias", icon: "pyramid", mark: "on" },
  { label: "Objetos auxiliares", icon: "sign", mark: "mixed" },
  { label: "General", icon: "blocks", mark: "mixed" },
  { label: "Numeración", icon: "numbers", mark: "off" },
  {
    label: "Colores en el gráfico según",
    icon: "ruler",
    mark: "mixed",
    children: [
      radio("Estándar"),
      radio("Material"),
      radio("Sección"),
      radio("Tipo de barra"),
      radio("Articulación en barra"),
      radio("Tipo de superficie - Geometría"),
      radio("Tipo de superficie - Rigidez"),
      radio("Espesor de superficie"),
      radio("Lado de superficie +/- z"),
      radio("Tipo de sólido"),
      radio("Visibilidad", { framed: true }),
      radio("Factor de longitud eficaz", { leaf: false }),
    ],
  },
  {
    label: "Renderizado",
    icon: "teapot",
    mark: "mixed",
    children: [render("Modelo"), render("Apoyos"), render("Cargas"), render("Iluminación")],
  },
  { label: "Preselección", icon: "ruler", mark: "mixed" },
  { label: "Módulos adicionales", icon: "modules", mark: "mixed" },
];

function Toggle({ node, selected, onSelect }: { node: TreeNode; selected: string; onSelect: (s: string) => void }) {
  const [checked, setChecked] = useState(node.mark === "on");
  if (node.mark === "radio") {
    return (
      <span className="grid place-items-center">
        <input
          type="radio"
          name="color-by"
          checked={selected === node.label}
          onChange={() => onSelect(node.label)}
          className="peer col-start-1 row-start-1 size-[13px] appearance-none rounded-full border border-[#3d4046] bg-linear-to-br from-[#c6cfdf] to-white"
        />
        <span className="col-start-1 row-start-1 size-[5px] rounded-full bg-black invisible peer-checked:visible pointer-events-none" />
      </span>
    );
  }
  return (
    <span className="grid place-items-center">
      <input
        type="checkbox"
        checked={checked}
        onChange={(e) => setChecked(e.target.checked)}
        className="peer col-start-1 row-start-1 size-[13px] appearance-none border border-[#3d4046] bg-linear-to-br from-[#c9cfdb] to-white"
      />
      {node.mark === "mixed" ? (
        <span className="col-start-1 row-start-1 size-[7px] bg-[#9a9a9a] pointer-events-none" />
      ) : (
        <svg viewBox="0 0 9 9" className="col-start-1 row-start-1 size-[9px] invisible peer-checked:visible pointer-events-none" aria-hidden="true">
          <path d="M1 4l2.500 3L8 1.500" stroke="#000" strokeWidth="2" fill="none" />
        </svg>
      )}
    </span>
  );
}

function Expander({ open }: { open: boolean }) {
  return (
    <button type="button" aria-label={open ? "Contraer" : "Expandir"} className="relative size-[9px] shrink-0">
      <svg viewBox="0 0 9 9" className="size-[9px]" aria-hidden="true">
        <path d="M.5.5h8v8h-8z" fill="#fafafa" stroke="#9097a3" />
        <path d={open ? "M2 4.500h5" : "M2 4.500h5M4.500 2v5"} stroke="#2b4a9e" />
      </svg>
    </button>
  );
}

interface TreeListProps {
  nodes: TreeNode[];
  selected: string;
  onSelect: (s: string) => void;
  nested?: boolean;
}

function TreeList({ nodes, selected, onSelect, nested }: TreeListProps) {
  return (
    <ul className={nested ? "pl-[19px]" : "pl-[7px]"}>
      {nodes.map((node, i) => (
        <li
          key={node.label}
          className={clsx(
            "relative before:absolute before:left-1 before:border-l before:border-dotted before:border-[#808080]",
            i === 0 && !nested ? "before:top-2 before:bottom-0" : i === nodes.length - 1 ? "before:top-0 before:h-2.5" : "before:inset-y-0"
          )}
        >
          <div className="relative h-[18px] flex items-center">
            {node.leaf ? <span className="w-1 h-px ml-[5px]" /> : <span className="pt-0.5 flex"><Expander open={!!node.children} /></span>}
            <span className={clsx("mt-0.5 mr-px border-t border-dotted border-[#808080] shrink-0", node.leaf ? "-ml-1 w-[11px]" : "ml-px w-1.5")} />
            <label className="flex items-center">
              <Toggle node={node} selected={selected} onSelect={onSelect} />
              <Icon name={node.icon} className="size-4 ml-0.5 mr-[5px]" />
              <span className={clsx("whitespace-nowrap", node.bold && "font-bold")}>{node.label}</span>
            </label>
            {node.framed && (
              <span className="absolute -left-px -top-[3px] w-[128px] h-6 border-3 border-[#0000ff] drop-shadow-[5px_5px_2px_rgba(0,0,0,0.4)] pointer-events-none" />
            )}
          </div>
          {node.children && <TreeList nodes={node.children} selected={selected} onSelect={onSelect} nested />}
        </li>
      ))}
    </ul>
  );
}

function Navigator() {
  const [selected, setSelected] = useState("Visibilidad");
  return (
    <aside className="w-[419px] shrink-0 flex flex-col border-x border-[#a9b0bf]">
      <header className="h-[19px] flex items-center pl-[3px] pr-1 bg-[#b9bfca] text-[11px] text-[#4a4f5a]">
        <h2 className="flex-1">Navegador de proyectos - Mostrar</h2>
        <button type="button" aria-label="Fijar" className="mr-2">
          <svg viewBox="0 0 9 9" className="size-[9px]" aria-hidden="true">
            <path d="M2.500 0v5M6.500 0v5M2 .5h5M0 5.500h9M4.500 6v3M5.500 0v5" stroke="#656b77" fill="none" />
          </svg>
        </button>
        <button type="button" aria-label="Cerrar">
          <svg viewBox="0 0 9 9" className="size-[9px]" aria-hidden="true">
            <path d="M.5.5l8 8M8.500.5l-8 8" stroke="#656b77" strokeWidth="1.200" />
          </svg>
        </button>
      </header>
      <div className="flex-1 border-x-2 border-t-2 border-[#e4e8f1] bg-[#fbfbf3] pt-[2px] font-['Open_Sans',sans-serif] text-[12px] text-black">
        <TreeList nodes={tree} selected={selected} onSelect={setSelected} />
      </div>
    </aside>
  );
}

/* ---------- viewport ---------- */

const STEP = 39.4;
const supports = Array.from({ length: 9 }, (_, r) => Array.from({ length: 9 }, (_, c) => [c, r]))
  .flat()
  .filter(([c, r]) => r === 0 || r === 8 || c === 0 || c === 8);

function Model() {
  return (
    <svg viewBox="0 0 706 356" className="absolute left-[56px] top-[126px] w-[706px] h-[356px]" role="img" aria-label="Modelo">
      <rect x="2" y="2" width="351" height="351" fill="#40ff40" />
      <rect x="353" y="2" width="350" height="351" fill="#ff4040" />
      <path d="M2.500 2v351M703.500 2v351M2 2.500h702M2 352.500h702" stroke="#141414" />
      <path d="M352.500 3v349" stroke="#2c8a2c" />
      <path d="M353.500 3v349" stroke="#6b1a1a" />
      {supports.map(([c, r]) => (
        <g key={`${c}-${r}`}>
          <rect x={Math.round(19 + c * STEP)} y={Math.round(19 + r * STEP)} width="3" height="2" fill="#a3702a" />
          <rect x={Math.round(369 + c * STEP)} y={Math.round(19 + r * STEP)} width="3" height="2" fill="#b8500c" />
        </g>
      ))}
      {[2.5, 353, 703.5].map((x) => (
        <path key={x} d={`M${x - 1.5} 1h3v3h-3zM${x - 1.5} 351h3v3h-3z`} fill="#8c0a0a" />
      ))}
    </svg>
  );
}

const legend = [
  { label: "Superficies por apoyo - 1 - EEE EE", swatch: "bg-[#00ff00]" },
  { label: "Superficies por apoyo - 2 - EEE EE", swatch: "bg-[#ff0000]" },
];

function LegendPanel() {
  return (
    <section className="absolute right-[112px] top-[42px] w-[314px] h-[516px] flex flex-col border border-t-[#e4e8f1] border-l-[#e4e8f1] border-r-[#7f858f] border-b-[#7f858f] bg-[#e9edf6] px-[3px] pb-[3px]">
      <header className="h-[26px] pt-1 flex items-center pl-0.5 pr-1">
        <h2 className="flex-1 text-[11px] font-bold text-[#4a4f5a]">Panel</h2>
        <button type="button" aria-label="Cerrar panel">
          <svg viewBox="0 0 8 8" className="size-2" aria-hidden="true">
            <path d="M.5.5l7 7M7.500.5l-7 7" stroke="#656b77" strokeWidth="1.200" />
          </svg>
        </button>
      </header>
      <div className="flex-1 flex flex-col border border-[#a9afbb] border-b-[#7b818e] bg-[#f0f0f0] px-[5px]">
        <h3 className="h-[23px] pt-[6px] font-['Liberation_Sans',sans-serif] text-[11px] leading-4 text-black">Visibilidades definidas por el usuario</h3>
        <ul className="flex-1 border-l border-t border-[#8f8f8f] bg-white pt-px pl-[5px]">
          {legend.map((row) => (
            <li key={row.label} className="h-[18px] flex items-center gap-1 font-['Open_Sans',sans-serif] text-[11px] text-black">
              <span className={clsx("size-4 border border-[#d9d9d9]", row.swatch)} />
              {row.label}
            </li>
          ))}
        </ul>
        <div className="h-9 pt-[7px] pl-px">
          <button type="button" aria-label="Copiar" className="w-[25px] h-5 flex items-center justify-center border border-[#a6a6a6] bg-[#e1e1e1]">
            <svg viewBox="0 0 16 16" className="size-4" aria-hidden="true">
              <path d="M1 2q3-2 6 0v9q-3 2-6 0z" fill="#8a8175" stroke="#4a453d" />
              <path d="M4 2v9" stroke="#f2efe8" strokeWidth="2" />
              <path d="M7 1.500h5l2 2" stroke="#444" strokeWidth="1.500" fill="none" />
              <path d="M15 1v4h-4z" fill="#444" />
              <path d="M9 6.500h4l2 2V15.500H9z" fill="#f2f2f2" stroke="#777" />
              <path d="M10.500 9.500h3M10.500 11.500h3M10.500 13.500h3" stroke="#777" />
            </svg>
          </button>
        </div>
      </div>
      <footer className="h-[23px] bg-[#cfd3dc] pl-[3px]">
        <button type="button" aria-label="Escala de colores" className="w-[23px] h-5 flex items-center justify-center rounded-b-xs border-x border-b border-[#c3e4e6] bg-[#f1f4f4]">
          <svg viewBox="0 0 14 14" className="size-3.5" aria-hidden="true">
            <path d="M.5.5h13v3H.5z" fill="#0000ff" stroke="#6b6b6b" />
            <path d="M.5 5.500h13v3H.5z" fill="#00ff00" stroke="#6b6b6b" />
            <path d="M.5 10.500h13v3H.5z" fill="#ff0000" stroke="#6b6b6b" />
          </svg>
        </button>
      </footer>
    </section>
  );
}

export default function App() {
  return (
    <div className="min-h-screen flex flex-col bg-[#cfd3dc] font-['Noto_Sans',sans-serif] select-none">
      <header className="h-[23px] flex items-center gap-[5px] pl-0.5 bg-white text-[11px] text-black">
        <svg viewBox="0 0 16 16" className="size-4" aria-hidden="true">
          <path d="M4 4q3-4 7-3 5 1 5 6-1 4-5 6L6 9z" fill="#5c7690" stroke="#2d3d50" strokeWidth=".8" />
          <path d="M7 3q4 2 4 9M10 2q4 2 4 8" stroke="#a9bccf" fill="none" />
          <path d="M7 6.500H2L1.500 10q4-1.500 4.500 1.500T1 14" stroke="#7c5a06" strokeWidth="3.200" fill="none" />
          <path d="M7 6.500H2L1.500 10q4-1.500 4.500 1.500T1 14" stroke="#f7b51b" strokeWidth="1.800" fill="none" />
        </svg>
        <h1>RFEM 5.20.01 x64 - [003226-model-file*]</h1>
      </header>
      <MenuBar />
      <div className="flex flex-col gap-px">
        <ToolRow bars={topBars} />
        <ToolRow bars={bottomBars} />
      </div>
      <div className="flex-1 flex gap-1 pt-px">
        <Navigator />
        <main className="relative flex-1 border-l-2 border-t-2 border-[#6e737d] bg-white">
          <p className="pl-1 pt-1 font-['Liberation_Sans',sans-serif] text-[11px] leading-4 text-black">Modo de visibilidad - generado</p>
          <Model />
          <LegendPanel />
        </main>
      </div>
    </div>
  );
}
